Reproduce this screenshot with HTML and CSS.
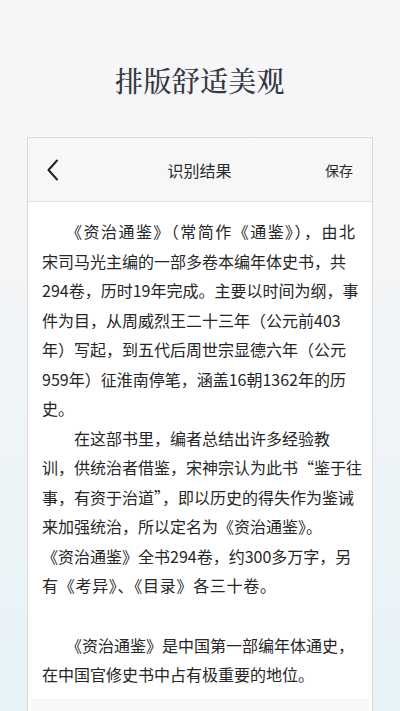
FILE: index.html
```html
<!DOCTYPE html>
<html lang="zh-CN">
<head>
<meta charset="utf-8">
<title>排版舒适美观</title>
<link rel="stylesheet" href="styles.css">
</head>
<body>
<div class="page">
  <h1 class="headline">排版舒适美观</h1>
  <div class="card">
    <div class="bar">
      <span class="back">
        <svg width="14" height="22" viewBox="0 0 14 22"><path d="M11 1.5 L2.5 11 L11 20.5" fill="none" stroke="#222" stroke-width="2" stroke-linecap="round" stroke-linejoin="round"/></svg>
      </span>
      <span class="bar-title">识别结果</span>
      <span class="save">保存</span>
    </div>
    <div class="content">
      <p class="para"><span class="fit line-a">《资治通鉴》（常简作《通鉴》），由北</span><br>宋司马光主编的一部多卷本编年体史书，共<br>294卷，历时19年完成。主要以时间为纲，事<br>件为目，从周威烈王二十三年（公元前403<br>年）写起，到五代后周世宗显德六年（公元<br>959年）征淮南停笔，涵盖16朝1362年的历<br>史。</p>
      <p class="para">在这部书里，编者总结出许多经验教<br>训，供统治者借鉴，宋神宗认为此书“鉴于往<br>事，有资于治道”，即以历史的得失作为鉴诫<br>来加强统治，所以定名为《资治通鉴》。<br><span class="full">《资治通鉴》全书294卷，约300多万字，另</span><br><span class="fit line-b">有《考异》、《目录》各三十卷。</span></p>
      <p class="para gap">《资治通鉴》是中国第一部编年体通史，<br>在中国官修史书中占有极重要的地位。</p>
    </div>
    <div class="footer"></div>
  </div>
</div>
</body>
</html>
```

FILE: styles.css
```css
html, body {
  margin: 0;
  padding: 0;
}
body {
  width: 400px;
  height: 711px;
  overflow: hidden;
  font-family: "Noto Sans CJK SC", "Noto Sans", sans-serif;
  background: linear-gradient(180deg, #f7f7f8 0%, #f3f5f7 40%, #e7f3f7 100%);
}
.page {
  height: 711px;
  display: flex;
  flex-direction: column;
}
.headline {
  margin: 60px 0 0;
  height: 40px;
  line-height: 40px;
  text-align: center;
  font-family: "Noto Serif CJK SC", "Noto Sans CJK SC", serif;
  font-weight: 500;
  font-size: 28px;
  color: #343940;
  letter-spacing: 0.3px;
}
.card {
  margin: 37px 27px 0;
  border: 1px solid #dadada;
  border-bottom: none;
  background: #fff;
  display: flex;
  flex-direction: column;
}
.bar {
  height: 63px;
  background: #f7f7f7;
  border-bottom: 1px solid #e3e3e3;
  display: flex;
  align-items: center;
  padding: 0 19px 0 18px;
  color: #2b2b2b;
}
.back {
  width: 60px;
  display: flex;
  align-items: center;
}
.bar-title {
  flex: 1;
  text-align: center;
  font-size: 16px;
}
.save {
  width: 60px;
  text-align: right;
  font-size: 14px;
}
.content {
  padding: 15px 10px 9px 14px;
  font-size: 16px;
  line-height: 29.5px;
  color: #262626;
  white-space: nowrap;
  text-spacing-trim: trim-start;
}
.para {
  margin: 0;
  text-indent: 2em;
}
.full {
  text-spacing-trim: space-all;
}
.fit {
  display: inline-block;
  text-indent: 0;
  text-align: justify;
  text-align-last: justify;
  vertical-align: top;
}
.line-a {
  width: 281px;
}
.line-b {
  width: 234px;
}
.gap {
  margin-top: 30px;
}
.footer {
  height: 30px;
  background: #f8f8f8;
  border-top: 1px solid #f1f1f1;
  margin: 0 3px;
}
```
